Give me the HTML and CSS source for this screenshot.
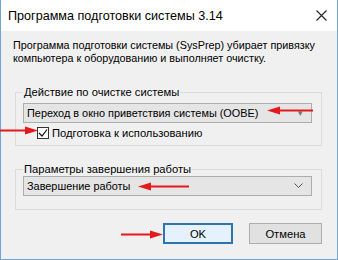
FILE: index.html
```html
<!DOCTYPE html>
<html lang="ru">
<head>
    <meta charset="UTF-8">
    <title>Программа подготовки системы 3.14</title>
    <link rel="stylesheet" href="styles.css">
</head>
<body>
    <div class="window">
        <div class="titlebar">
            <span>Программа подготовки системы 3.14</span>
            <svg class="close" width="11" height="11" viewBox="0 0 11 11">
                <path d="M0.5 0.5 L10.5 10.5 M10.5 0.5 L0.5 10.5" stroke="#222" stroke-width="1.1" fill="none"/>
            </svg>
        </div>

        <div class="content">
            <p class="desc">Программа подготовки системы (SysPrep) убирает привязку компьютера к оборудованию и выполняет очистку.</p>

            <fieldset class="group">
                <legend>Действие по очистке системы</legend>
                <div class="combo">
                    <span>Переход в окно приветствия системы (OOBE)</span>
                    <span class="combo-arrow small">▾</span>
                </div>
                <label class="check-row">
                    <span class="checkbox">
                        <svg width="10" height="10" viewBox="0 0 10 10">
                            <path d="M1 5 L4 8 L9 1.5" stroke="#111" stroke-width="1.2" fill="none"/>
                        </svg>
                    </span>
                    Подготовка к использованию
                </label>
            </fieldset>

            <fieldset class="group second">
                <legend>Параметры завершения работы</legend>
                <div class="combo">
                    <span>Завершение работы</span>
                    <svg class="combo-arrow" width="9" height="6" viewBox="0 0 9 6">
                        <path d="M0.5 0.5 L4.5 4.5 L8.5 0.5" stroke="#555" stroke-width="1" fill="none"/>
                    </svg>
                </div>
            </fieldset>

            <div class="buttons">
                <button class="btn default">OK</button>
                <button class="btn">Отмена</button>
            </div>
        </div>

        <!-- red arrows drawn over the screenshot -->
        <svg class="arrow a1" width="48" height="9" viewBox="0 0 48 9">
            <path d="M46 4.5 H10" stroke="#e3191c" stroke-width="2"/>
            <path d="M0 4.5 L13 0.5 L13 8.5 Z" fill="#e3191c"/>
        </svg>
        <svg class="arrow a2" width="52" height="9" viewBox="0 0 52 9">
            <path d="M51 4.5 H10" stroke="#e3191c" stroke-width="2"/>
            <path d="M0 4.5 L13 0.5 L13 8.5 Z" fill="#e3191c"/>
        </svg>
        <svg class="arrow a3" width="38" height="9" viewBox="0 0 38 9">
            <path d="M0 4.5 H28" stroke="#e3191c" stroke-width="2"/>
            <path d="M38 4.5 L25 0.5 L25 8.5 Z" fill="#e3191c"/>
        </svg>
        <svg class="arrow a4" width="42" height="9" viewBox="0 0 42 9">
            <path d="M0 4.5 H32" stroke="#e3191c" stroke-width="2"/>
            <path d="M42 4.5 L29 0.5 L29 8.5 Z" fill="#e3191c"/>
        </svg>
    </div>
</body>
</html>
```

FILE: styles.css
```css
body {
    margin: 0;
    font-family: "Liberation Sans", Arial, sans-serif;
    font-size: 11.2px;
    color: #000;
}

.window {
    position: relative;
    width: 338px;
    height: 260px;
    box-sizing: border-box;
    border: 1px solid #6fa6d8;
    border-top: none;
    background: #f0f0f0;
    display: flex;
    flex-direction: column;
}

.titlebar {
    height: 31px;
    background: #fff;
    display: flex;
    align-items: center;
    justify-content: space-between;
    padding: 0 10px 0 7px;
    font-size: 12.6px;
}

.content {
    flex: 1;
    padding: 8px 15px 0 14px;
}

.desc {
    margin: 0 -16px 20px -2px;
    line-height: 13px;
    font-size: 10.8px;
}

.group {
    margin: 0;
    padding: 4px 9px 5px 7px;
    border: 1px solid #dcdcdc;
}
.group legend {
    padding: 0 1px;
    line-height: 14px;
}
.group.second {
    margin-top: 16px;
    padding-top: 0;
    padding-bottom: 13px;
}

.combo {
    height: 20px;
    box-sizing: border-box;
    border: 1px solid #adadad;
    background: #e5e5e5;
    display: flex;
    align-items: center;
    justify-content: space-between;
    padding: 0 8px 0 3px;
    font-size: 10.9px;
}
.combo-arrow.small {
    font-size: 9px;
    color: #777;
}

.check-row {
    display: flex;
    align-items: center;
    margin: 3px 0 0 14px;
    height: 14px;
}
.checkbox {
    width: 12px;
    height: 12px;
    box-sizing: border-box;
    border: 1px solid #333;
    background: #fff;
    display: flex;
    align-items: center;
    justify-content: center;
    margin-right: 3px;
}

.buttons {
    display: flex;
    justify-content: flex-end;
    gap: 16px;
    margin-top: 13px;
}
.btn {
    font-family: inherit;
    font-size: 11.2px;
    height: 21px;
    width: 73px;
    border: 1px solid #adadad;
    background: #e1e1e1;
    padding: 0;
}
.btn.default {
    width: 70px;
    border: 2px solid #2e74b5;
    background: #e5f1fb;
}

.arrow {
    position: absolute;
}
.a1 { left: 266px; top: 106px; }
.a2 { left: 137px; top: 182px; }
.a3 { left: -1px; top: 126px; }
.a4 { left: 120px; top: 230px; }
```
